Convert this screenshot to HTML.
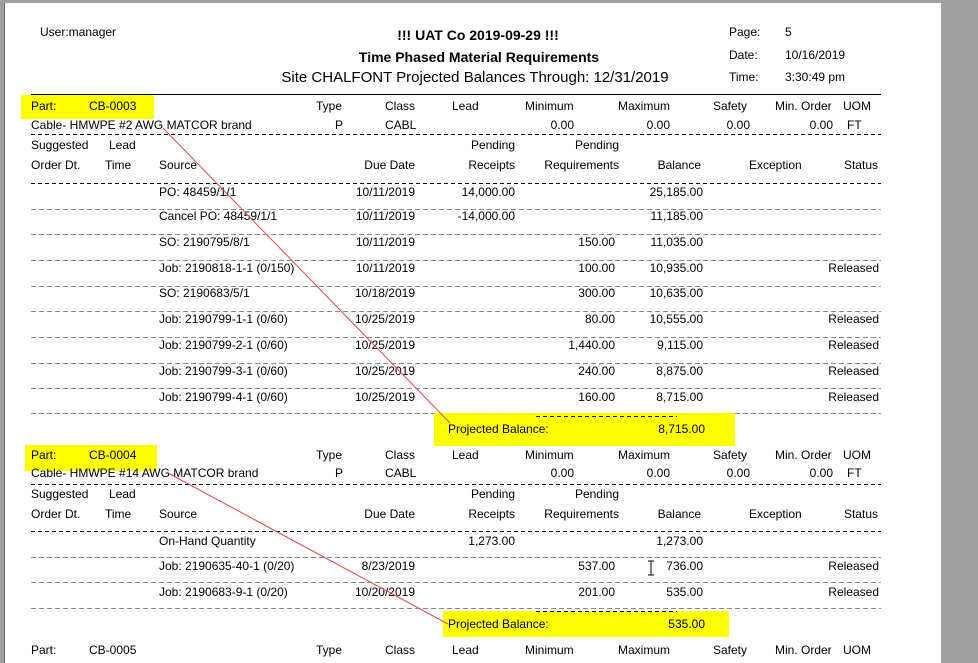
<!DOCTYPE html>
<html><head><meta charset="utf-8"><style>
html,body{margin:0;padding:0}
body{width:978px;height:652px;background:#a0a0a0;position:relative;overflow:hidden;font-family:"Liberation Sans",Arial,sans-serif;font-size:12px;color:#000}
#pg{position:absolute;left:4px;top:3px;width:936px;height:660px;background:#fff;border-left:1px solid #6a6a6a}
.t{position:absolute;white-space:nowrap;line-height:14px}
.r{position:absolute;white-space:nowrap;line-height:14px;text-align:right}
.y{position:absolute;background:#ffff00}
.dd{position:absolute;height:1px;left:31px;width:850px;background:repeating-linear-gradient(to right,#000 0 4px,transparent 4px 7px)}
.dg{position:absolute;height:1px;left:31px;width:850px;background:repeating-linear-gradient(to right,#8a8a8a 0 5px,transparent 5px 8px)}
.ds{position:absolute;height:1px;left:536px;width:141px;background:repeating-linear-gradient(to right,#000 0 4px,transparent 4px 7px)}
</style></head><body>
<div id="pg"></div>

<div class="t" style="left:40px;top:25px">User:manager</div>
<div class="t" style="left:0;width:956px;text-align:center;top:26px;font-size:14px;line-height:18px;font-weight:bold;-webkit-text-stroke:0">!!! UAT Co 2019-09-29 !!!</div>
<div class="t" style="left:0;width:958px;text-align:center;top:48px;font-size:14px;line-height:18px;font-weight:bold">Time Phased Material Requirements</div>
<div class="t" style="left:0;width:950px;text-align:center;top:69px;font-size:15px;line-height:18px">Site CHALFONT Projected Balances Through: 12/31/2019</div>
<div class="t" style="left:729px;top:25px">Page:</div><div class="t" style="left:785px;top:25px">5</div>
<div class="t" style="left:729px;top:48px">Date:</div><div class="t" style="left:785px;top:48px">10/16/2019</div>
<div class="t" style="left:729px;top:70px">Time:</div><div class="t" style="left:785px;top:70px">3:30:49 pm</div>
<div style="position:absolute;left:31px;top:94px;width:850px;height:1px;background:#000"></div>

<!-- Part 1 -->
<div class="y" style="left:21px;top:95px;width:133px;height:24px"></div>
<div class="t" style="left:31px;top:99px">Part:</div><div class="t" style="left:89px;top:99px">CB-0003</div>
<div class="r" style="right:636px;top:99px">Type</div>
<div class="t" style="left:385px;top:99px">Class</div>
<div class="t" style="left:452px;top:99px">Lead</div>
<div class="t" style="left:525px;top:99px">Minimum</div>
<div class="t" style="left:618px;top:99px">Maximum</div>
<div class="t" style="left:713px;top:99px">Safety</div>
<div class="t" style="left:775px;top:99px">Min. Order</div>
<div class="t" style="left:843px;top:99px">UOM</div>
<div class="t" style="left:31px;top:118px">Cable- HMWPE #2 AWG MATCOR brand</div>
<div class="t" style="left:335px;top:118px">P</div>
<div class="t" style="left:385px;top:118px">CABL</div>
<div class="r" style="right:404px;top:118px">0.00</div>
<div class="r" style="right:308px;top:118px">0.00</div>
<div class="r" style="right:228px;top:118px">0.00</div>
<div class="r" style="right:145px;top:118px">0.00</div>
<div class="t" style="left:847px;top:118px">FT</div>
<div class="dd" style="top:134px"></div>
<div class="t" style="left:31px;top:138px">Suggested</div><div class="t" style="left:109px;top:138px">Lead</div>
<div class="r" style="right:463px;top:138px">Pending</div><div class="r" style="right:359px;top:138px">Pending</div>
<div class="t" style="left:31px;top:158px">Order Dt.</div><div class="t" style="left:105px;top:158px">Time</div><div class="t" style="left:159px;top:158px">Source</div>
<div class="r" style="right:563px;top:158px">Due Date</div>
<div class="r" style="right:463px;top:158px">Receipts</div>
<div class="r" style="right:359px;top:158px">Requirements</div>
<div class="r" style="right:277px;top:158px">Balance</div>
<div class="t" style="left:749px;top:158px">Exception</div>
<div class="r" style="right:100px;top:158px">Status</div>
<div class="dd" style="top:183px"></div>

<div class="t" style="left:159px;top:185px">PO: 48459/1/1</div><div class="r" style="right:563px;top:185px">10/11/2019</div><div class="r" style="right:463px;top:185px">14,000.00</div><div class="r" style="right:275px;top:185px">25,185.00</div>
<div class="dg" style="top:209px"></div>
<div class="t" style="left:159px;top:209px">Cancel PO: 48459/1/1</div><div class="r" style="right:563px;top:209px">10/11/2019</div><div class="r" style="right:463px;top:209px">-14,000.00</div><div class="r" style="right:275px;top:209px">11,185.00</div>
<div class="dg" style="top:234px"></div>
<div class="t" style="left:159px;top:235px">SO: 2190795/8/1</div><div class="r" style="right:563px;top:235px">10/11/2019</div><div class="r" style="right:363px;top:235px">150.00</div><div class="r" style="right:275px;top:235px">11,035.00</div>
<div class="dg" style="top:260px"></div>
<div class="t" style="left:159px;top:261px">Job: 2190818-1-1 (0/150)</div><div class="r" style="right:563px;top:261px">10/11/2019</div><div class="r" style="right:363px;top:261px">100.00</div><div class="r" style="right:275px;top:261px">10,935.00</div><div class="r" style="right:99px;top:261px">Released</div>
<div class="dg" style="top:286px"></div>
<div class="t" style="left:159px;top:286px">SO: 2190683/5/1</div><div class="r" style="right:563px;top:286px">10/18/2019</div><div class="r" style="right:363px;top:286px">300.00</div><div class="r" style="right:275px;top:286px">10,635.00</div>
<div class="dg" style="top:311px"></div>
<div class="t" style="left:159px;top:312px">Job: 2190799-1-1 (0/60)</div><div class="r" style="right:563px;top:312px">10/25/2019</div><div class="r" style="right:363px;top:312px">80.00</div><div class="r" style="right:275px;top:312px">10,555.00</div><div class="r" style="right:99px;top:312px">Released</div>
<div class="dg" style="top:337px"></div>
<div class="t" style="left:159px;top:338px">Job: 2190799-2-1 (0/60)</div><div class="r" style="right:563px;top:338px">10/25/2019</div><div class="r" style="right:363px;top:338px">1,440.00</div><div class="r" style="right:275px;top:338px">9,115.00</div><div class="r" style="right:99px;top:338px">Released</div>
<div class="dg" style="top:363px"></div>
<div class="t" style="left:159px;top:364px">Job: 2190799-3-1 (0/60)</div><div class="r" style="right:563px;top:364px">10/25/2019</div><div class="r" style="right:363px;top:364px">240.00</div><div class="r" style="right:275px;top:364px">8,875.00</div><div class="r" style="right:99px;top:364px">Released</div>
<div class="dg" style="top:388px"></div>
<div class="t" style="left:159px;top:390px">Job: 2190799-4-1 (0/60)</div><div class="r" style="right:563px;top:390px">10/25/2019</div><div class="r" style="right:363px;top:390px">160.00</div><div class="r" style="right:275px;top:390px">8,715.00</div><div class="r" style="right:99px;top:390px">Released</div>
<div class="dg" style="top:413px"></div>

<div class="y" style="left:434px;top:413px;width:301px;height:33px"></div>
<div class="ds" style="top:416px"></div>
<div class="t" style="left:448px;top:422px">Projected Balance:</div>
<div class="r" style="right:273px;top:422px">8,715.00</div>

<!-- Part 2 -->
<div class="y" style="left:25px;top:445px;width:132px;height:26px"></div>
<div class="t" style="left:31px;top:448px">Part:</div><div class="t" style="left:89px;top:448px">CB-0004</div>
<div class="r" style="right:636px;top:448px">Type</div>
<div class="t" style="left:385px;top:448px">Class</div>
<div class="t" style="left:452px;top:448px">Lead</div>
<div class="t" style="left:525px;top:448px">Minimum</div>
<div class="t" style="left:618px;top:448px">Maximum</div>
<div class="t" style="left:713px;top:448px">Safety</div>
<div class="t" style="left:775px;top:448px">Min. Order</div>
<div class="t" style="left:843px;top:448px">UOM</div>
<div class="t" style="left:31px;top:466px">Cable- HMWPE #14 AWG MATCOR brand</div>
<div class="t" style="left:335px;top:466px">P</div>
<div class="t" style="left:385px;top:466px">CABL</div>
<div class="r" style="right:404px;top:466px">0.00</div>
<div class="r" style="right:308px;top:466px">0.00</div>
<div class="r" style="right:228px;top:466px">0.00</div>
<div class="r" style="right:145px;top:466px">0.00</div>
<div class="t" style="left:847px;top:466px">FT</div>
<div class="dd" style="top:484px"></div>
<div class="t" style="left:31px;top:487px">Suggested</div><div class="t" style="left:109px;top:487px">Lead</div>
<div class="r" style="right:463px;top:487px">Pending</div><div class="r" style="right:359px;top:487px">Pending</div>
<div class="t" style="left:31px;top:507px">Order Dt.</div><div class="t" style="left:105px;top:507px">Time</div><div class="t" style="left:159px;top:507px">Source</div>
<div class="r" style="right:563px;top:507px">Due Date</div>
<div class="r" style="right:463px;top:507px">Receipts</div>
<div class="r" style="right:359px;top:507px">Requirements</div>
<div class="r" style="right:277px;top:507px">Balance</div>
<div class="t" style="left:749px;top:507px">Exception</div>
<div class="r" style="right:100px;top:507px">Status</div>
<div class="dd" style="top:531px"></div>
<div class="t" style="left:159px;top:534px">On-Hand Quantity</div><div class="r" style="right:463px;top:534px">1,273.00</div><div class="r" style="right:275px;top:534px">1,273.00</div>
<div class="dg" style="top:557px"></div>
<div class="t" style="left:159px;top:559px">Job: 2190635-40-1 (0/20)</div><div class="r" style="right:563px;top:559px">8/23/2019</div><div class="r" style="right:363px;top:559px">537.00</div><div class="r" style="right:275px;top:559px">736.00</div><div class="r" style="right:99px;top:559px">Released</div>
<div class="dg" style="top:582px"></div>
<div class="t" style="left:159px;top:585px">Job: 2190683-9-1 (0/20)</div><div class="r" style="right:563px;top:585px">10/20/2019</div><div class="r" style="right:363px;top:585px">201.00</div><div class="r" style="right:275px;top:585px">535.00</div><div class="r" style="right:99px;top:585px">Released</div>
<div class="dg" style="top:608px"></div>

<div class="y" style="left:443px;top:611px;width:286px;height:26px"></div>
<div class="ds" style="top:611px"></div>
<div class="t" style="left:448px;top:617px">Projected Balance:</div>
<div class="r" style="right:273px;top:617px">535.00</div>

<!-- Part 3 (cut) -->
<div class="t" style="left:31px;top:643px">Part:</div><div class="t" style="left:89px;top:643px">CB-0005</div>
<div class="r" style="right:636px;top:643px">Type</div>
<div class="t" style="left:385px;top:643px">Class</div>
<div class="t" style="left:452px;top:643px">Lead</div>
<div class="t" style="left:525px;top:643px">Minimum</div>
<div class="t" style="left:618px;top:643px">Maximum</div>
<div class="t" style="left:713px;top:643px">Safety</div>
<div class="t" style="left:775px;top:643px">Min. Order</div>
<div class="t" style="left:843px;top:643px">UOM</div>

<svg width="978" height="652" style="position:absolute;left:0;top:0" viewBox="0 0 978 652">
<line x1="163" y1="128" x2="450" y2="423" stroke="#e04848" stroke-width="1"/>
<line x1="168" y1="473" x2="448" y2="624" stroke="#e04848" stroke-width="1"/>
<path d="M648 561h6M651 561v14M648 575h6" stroke="#000" stroke-width="1" fill="none"/>
</svg>
</body></html>
